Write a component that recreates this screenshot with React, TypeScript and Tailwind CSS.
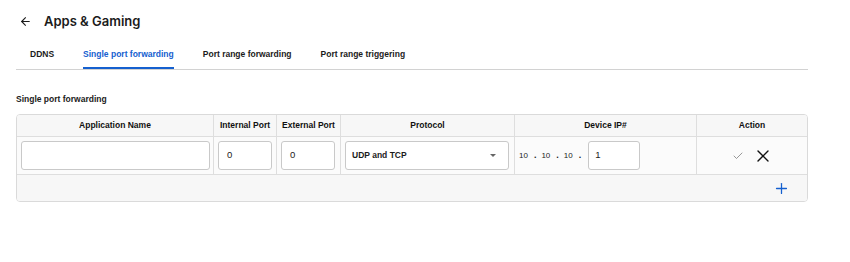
import { ArrowLeft, Check, X, Plus } from "lucide-react";

const tabs = ["DDNS", "Single port forwarding", "Port range forwarding", "Port range triggering"];

const cols = [
  { label: "Application Name", w: "w-[197px]" },
  { label: "Internal Port", w: "w-[63px]" },
  { label: "External Port", w: "w-[64px]" },
  { label: "Protocol", w: "w-[174px]" },
  { label: "Device IP#", w: "w-[182px]" },
  { label: "Action", w: "flex-1" },
];

const arial = { fontFamily: "'Liberation Sans', Arial, sans-serif" };

export default function App() {
  return (
    <div className="w-[850px] h-[262px] bg-white text-[#1b1b1b]" style={arial}>
      {/* Header */}
      <div className="h-[42px] flex items-center pl-[19px]">
        <ArrowLeft size={13} strokeWidth={2} className="text-[#1b1b1b]" />
        <h1
          className="ml-[12px] text-[13px] font-semibold leading-none"
          style={{ fontFamily: "Inter, 'Noto Sans', sans-serif" }}
        >
          Apps &amp; Gaming
        </h1>
      </div>

      {/* Tabs */}
      <div className="ml-[16px] w-[792px] flex gap-[29px] border-b border-[#d2d2d2] pl-[14px]">
        {tabs.map((t, i) => (
          <div
            key={t}
            className={`h-[27px] pt-[6px] leading-[12px] text-[8.5px] font-bold ${
              i === 1 ? "text-[#1560cf] border-b-2 border-[#1560cf]" : "border-b-2 border-transparent"
            }`}
          >
            {t}
          </div>
        ))}
      </div>

      {/* Section */}
      <div className="ml-[16px] mt-[23px] text-[8.5px] font-bold leading-[12px]">Single port forwarding</div>

      <div className="ml-[16px] mt-[9px] w-[792px] border border-[#dadada] rounded-[4px] overflow-hidden">
        {/* Header row */}
        <div className="flex h-[22px] bg-[#f7f7f7] border-b border-[#dedede]">
          {cols.map((c, i) => (
            <div
              key={c.label}
              className={`${c.w} flex items-center justify-center text-[8.5px] font-bold text-[#111] ${
                i < cols.length - 1 ? "border-r border-[#dedede]" : ""
              }`}
            >
              {c.label}
            </div>
          ))}
        </div>

        {/* Data row */}
        <div className="flex h-[38px] bg-[#fbfbfb] border-b border-[#dedede]">
          <div className="w-[197px] border-r border-[#dedede] flex items-center pl-[4px]">
            <div className="w-[189px] h-[29px] bg-white border border-[#c9c9c9] rounded-[3px]" />
          </div>
          <div className="w-[63px] border-r border-[#dedede] flex items-center pl-[4px]">
            <div className="w-[54px] h-[29px] bg-white border border-[#c9c9c9] rounded-[3px] flex items-center pl-[8px] text-[9.5px]">0</div>
          </div>
          <div className="w-[64px] border-r border-[#dedede] flex items-center pl-[4px]">
            <div className="w-[54px] h-[29px] bg-white border border-[#c9c9c9] rounded-[3px] flex items-center pl-[8px] text-[9.5px]">0</div>
          </div>
          <div className="w-[174px] border-r border-[#dedede] flex items-center pl-[4px]">
            <div className="w-[164px] h-[29px] bg-white border border-[#c9c9c9] rounded-[3px] flex items-center justify-between pl-[6px] pr-[12px]">
              <span className="text-[8.5px] font-bold">UDP and TCP</span>
              <span className="w-0 h-0 border-l-[3px] border-r-[3px] border-t-[3px] border-l-transparent border-r-transparent border-t-[#666]" />
            </div>
          </div>
          <div className="w-[182px] border-r border-[#dedede] flex items-center pl-[4px] text-[8px]">
            <span>10</span>
            <span className="ml-[6px] font-bold text-[9px]">.</span>
            <span className="ml-[5px]">10</span>
            <span className="ml-[6px] font-bold text-[9px]">.</span>
            <span className="ml-[5px]">10</span>
            <span className="ml-[6px] font-bold text-[9px]">.</span>
            <div className="ml-[7px] w-[52px] h-[29px] bg-white border border-[#c9c9c9] rounded-[3px] flex items-center pl-[6px] text-[9.5px]">1</div>
          </div>
          <div className="flex-1 flex items-center justify-center gap-[9px]">
            <Check size={12} strokeWidth={1.5} className="text-[#777]" />
            <X size={20} strokeWidth={1.6} className="text-[#111]" />
          </div>
        </div>

        {/* Footer row */}
        <div className="flex h-[26px] bg-[#f7f7f7] items-center justify-end pr-[17px]">
          <Plus size={17} strokeWidth={1.8} className="text-[#1560cf]" />
        </div>
      </div>
    </div>
  );
}
